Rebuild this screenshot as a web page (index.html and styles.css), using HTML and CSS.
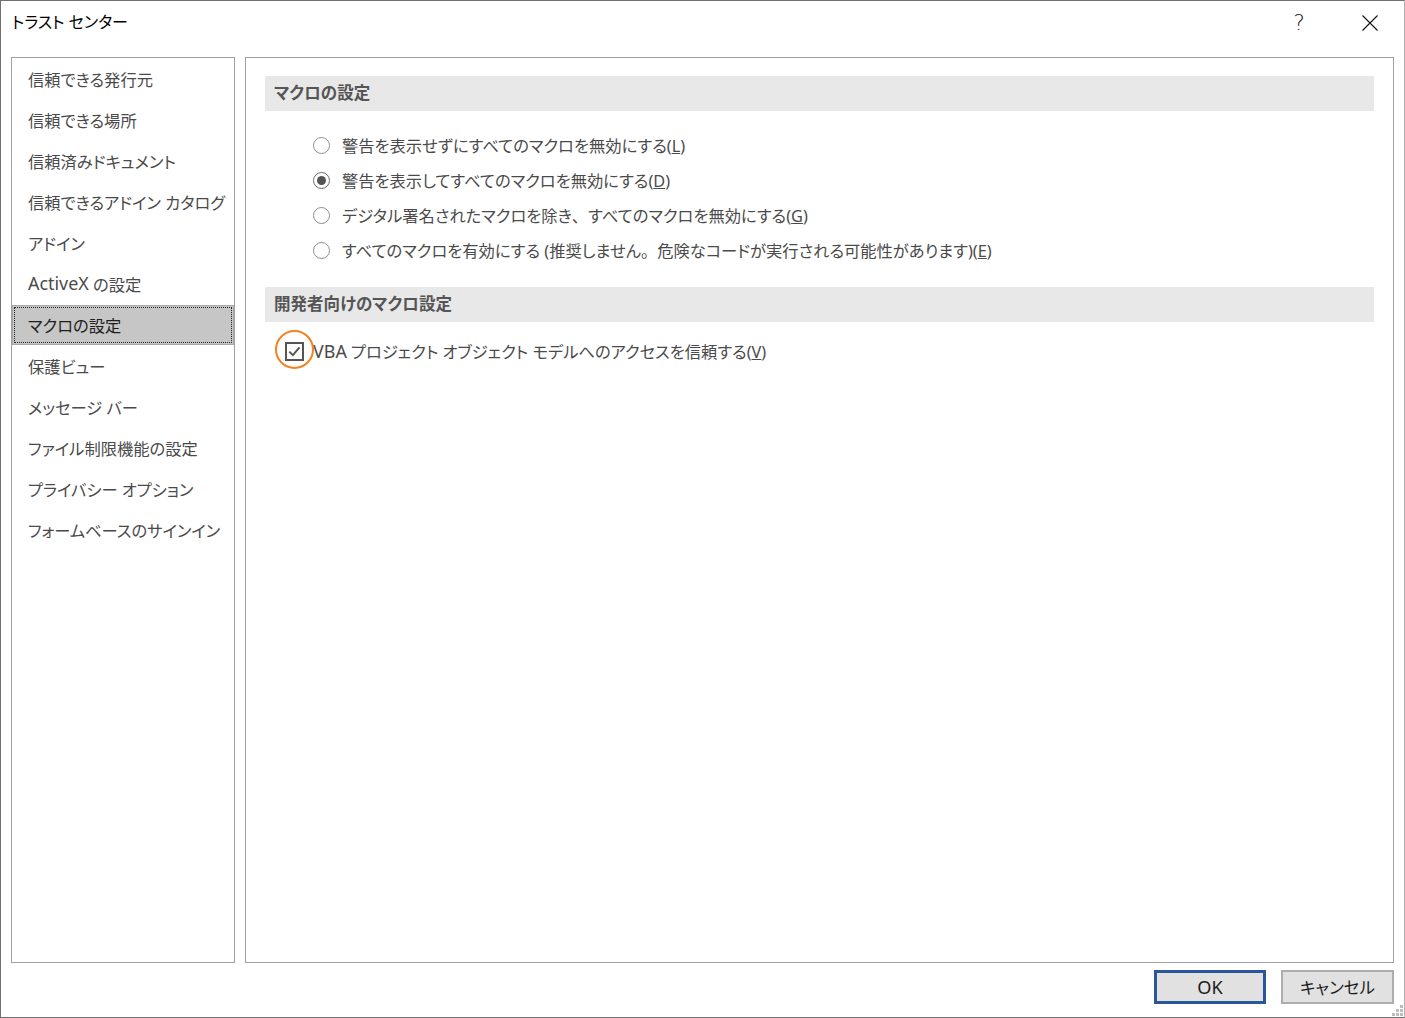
FILE: index.html
```html
<!DOCTYPE html>
<html lang="ja">
<head>
<meta charset="utf-8">
<title>トラスト センター</title>
<link rel="stylesheet" href="styles.css">
</head>
<body>
<div class="window">
  <div class="titlebar">
    <span class="title">トラスト センター</span>
    <div class="tb-buttons">
      <span class="help">?</span>
      <svg class="close" width="16" height="16" viewBox="0 0 16 16"><path d="M0.5 0.5 L15.5 15.5 M15.5 0.5 L0.5 15.5" stroke="#111" stroke-width="1.1" fill="none"/></svg>
    </div>
  </div>
  <div class="main">
    <nav class="sidebar">
      <ul class="nav">
        <li class="nav-item">信頼できる発行元</li>
        <li class="nav-item">信頼できる場所</li>
        <li class="nav-item">信頼済みドキュメント</li>
        <li class="nav-item">信頼できるアドイン カタログ</li>
        <li class="nav-item">アドイン</li>
        <li class="nav-item"><span class="latin">ActiveX</span>&nbsp;の設定</li>
        <li class="nav-item selected">マクロの設定</li>
        <li class="nav-item">保護ビュー</li>
        <li class="nav-item">メッセージ バー</li>
        <li class="nav-item">ファイル制限機能の設定</li>
        <li class="nav-item">プライバシー オプション</li>
        <li class="nav-item">フォームベースのサインイン</li>
      </ul>
    </nav>
    <section class="content">
      <div class="section-header">マクロの設定</div>
      <div class="radio-group">
        <div class="radio-row"><span class="radio"></span><span class="label">警告を表示せずにすべてのマクロを無効にする(<u>L</u>)</span></div>
        <div class="radio-row"><span class="radio checked"></span><span class="label">警告を表示してすべてのマクロを無効にする(<u>D</u>)</span></div>
        <div class="radio-row"><span class="radio"></span><span class="label">デジタル署名されたマクロを除き<span class="punct">、</span>すべてのマクロを無効にする(<u>G</u>)</span></div>
        <div class="radio-row"><span class="radio"></span><span class="label">すべてのマクロを有効にする (推奨しません<span class="punct">。</span>危険なコードが実行される可能性があります)(<u>E</u>)</span></div>
      </div>
      <div class="section-header">開発者向けのマクロ設定</div>
      <div class="check-row">
        <span class="checkbox">
          <svg width="15" height="15" viewBox="0 0 15 15"><path d="M2.3 7.6 L5.8 11.1 L12.6 3.4" stroke="#555" stroke-width="2" fill="none"/></svg>
          <span class="highlight"></span>
        </span>
        <span class="label"><span class="latin">VBA</span> プロジェクト オブジェクト モデルへのアクセスを信頼する(<u>V</u>)</span>
      </div>
    </section>
  </div>
  <div class="footer">
    <button class="btn btn-default"><span class="latin">OK</span></button>
    <button class="btn">キャンセル</button>
  </div>
  <svg class="grip" width="11" height="11" viewBox="0 0 11 11">
    <rect x="8" y="0" width="3" height="3" fill="#bcbcbc"/>
    <rect x="4" y="4" width="3" height="3" fill="#bcbcbc"/>
    <rect x="8" y="4" width="3" height="3" fill="#bcbcbc"/>
    <rect x="0" y="8" width="3" height="3" fill="#bcbcbc"/>
    <rect x="4" y="8" width="3" height="3" fill="#bcbcbc"/>
    <rect x="8" y="8" width="3" height="3" fill="#bcbcbc"/>
  </svg>
</div>
</body>
</html>
```
FILE: styles.css
```css
* { box-sizing: border-box; }
html, body { margin: 0; padding: 0; background: #fff; }
body {
  font-family: "Noto Sans", "Noto Sans CJK JP", sans-serif;
  font-feature-settings: "palt";
  color: #444;
}
.window {
  position: relative;
  width: 1405px;
  height: 1018px;
  border: 1px solid #707070;
  border-right-color: #b0b0b0;
  display: flex;
  flex-direction: column;
  background: #fff;
}
.titlebar {
  height: 56px;
  flex: none;
  display: flex;
  align-items: flex-start;
  padding: 11px 0 0 11px;
}
.title {
  font-size: 16px;
  line-height: 20px;
  color: #000;
}
.tb-buttons {
  margin-left: auto;
  display: flex;
  align-items: flex-start;
  margin-right: 26px;
}
.help {
  font-family: "DejaVu Sans", sans-serif;
  font-weight: 200;
  font-size: 22px;
  line-height: 22px;
  color: #222;
  margin-right: 57px;
}
.close { margin-top: 3px; }
.main {
  flex: none;
  height: 906px;
  display: flex;
  gap: 10px;
  padding: 0 10px;
}
.sidebar {
  width: 224px;
  border: 1px solid #a0a0a0;
  flex: none;
}
.nav {
  list-style: none;
  margin: 0;
  padding: 1px 0 0;
  display: flex;
  flex-direction: column;
  gap: 1px;
}
.nav-item {
  height: 40px;
  display: flex;
  align-items: center;
  padding-left: 16px;
  font-size: 16.3px;
  color: #4a4a4a;
  white-space: nowrap;
}
.nav-item.selected {
  background: #c6c6c6;
  color: #1e1e1e;
  box-shadow: inset 0 0 0 1px #a8a8a8;
  outline: 1px dotted #222;
  outline-offset: -3px;
}
.latin {
  font-size: 1.1em;
  line-height: 1;
}
.content {
  flex: 1;
  border: 1px solid #a0a0a0;
  padding: 18px 19px 0;
}
.section-header {
  height: 35px;
  background: #e8e8e8;
  display: flex;
  align-items: center;
  padding: 0 0 4px 9px;
  font-size: 16.5px;
  font-weight: bold;
  color: #555;
}
.radio-group {
  display: flex;
  flex-direction: column;
  padding: 17px 0 19px 48px;
}
.radio-row {
  height: 35px;
  display: flex;
  align-items: center;
}
.radio {
  width: 17px;
  height: 17px;
  border-radius: 50%;
  border: 1px solid #8e8e8e;
  background: #fff;
  flex: none;
  position: relative;
  margin-right: 12px;
}
.radio.checked { border-color: #6a6a6a; }
.radio.checked::after {
  content: "";
  position: absolute;
  left: 3px; top: 3px;
  width: 9px; height: 9px;
  border-radius: 50%;
  background: #555;
}
.label {
  font-size: 16.3px;
  color: #4a4a4a;
  white-space: nowrap;
  padding-bottom: 2px;
}
.punct { font-feature-settings: normal; }
.check-row {
  height: 58px;
  display: flex;
  align-items: center;
  padding-left: 20px;
}
.check-row .label { padding-bottom: 1px; }
.checkbox {
  position: relative;
  width: 19px;
  height: 19px;
  border: 2px solid #555;
  flex: none;
  display: flex;
  align-items: center;
  justify-content: center;
  margin-right: 9px;
}
.highlight {
  position: absolute;
  left: -12px;
  top: -14px;
  width: 39px;
  height: 39px;
  border: 2.5px solid #f58220;
  border-radius: 50%;
}
.footer {
  flex: 1;
  display: flex;
  justify-content: flex-end;
  align-items: flex-start;
  gap: 15px;
  padding: 7px 10px 0;
}
.btn {
  font-family: "Noto Sans", "Noto Sans CJK JP", sans-serif;
  font-feature-settings: "palt";
  height: 34px;
  width: 113px;
  background: #e1e1e1;
  border: 2px solid #adadad;
  font-size: 16.5px;
  color: #1a1a1a;
  padding: 0;
  display: flex;
  align-items: center;
  justify-content: center;
}
.btn-default {
  width: 112px;
  border: 3px solid #2b579a;
}
.grip {
  position: absolute;
  right: 1px;
  bottom: 1px;
}
```
